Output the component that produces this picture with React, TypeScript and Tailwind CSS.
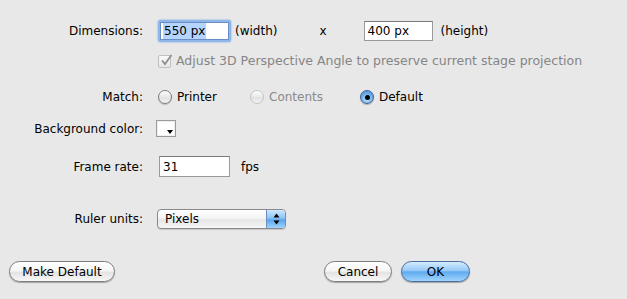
import React from "react";

const font = { fontFamily: '"DejaVu Sans", "Liberation Sans", sans-serif' };

function Label({ children }: { children: React.ReactNode }) {
  return <div className="w-[143px] shrink-0 text-right text-[12px] leading-none text-black">{children}</div>;
}

function Radio({ checked, disabled, label }: { checked?: boolean; disabled?: boolean; label: string }) {
  return (
    <div className="flex items-center">
      {checked ? (
        <div className="w-[14px] h-[14px] rounded-full border border-[#3d6296] bg-[radial-gradient(circle_at_50%_70%,#bfe3ff_0%,#6aaeea_55%,#4a8bd2_100%)] flex items-center justify-center shadow-[0_1px_1px_rgba(0,0,0,0.25)]">
          <div className="w-[5px] h-[5px] rounded-full bg-black" />
        </div>
      ) : (
        <div
          className={
            "w-[14px] h-[14px] rounded-full border bg-[linear-gradient(#ffffff,#e2e2e2_60%,#f4f4f4)] " +
            (disabled ? "border-[#c4c4c4]" : "border-[#7b7b7b] shadow-[0_1px_1px_rgba(0,0,0,0.2)]")
          }
        />
      )}
      <span className={"ml-[5px] text-[12px] leading-none " + (disabled ? "text-[#8a8a8a]" : "text-black")}>{label}</span>
    </div>
  );
}

function AquaButton({ children, primary, w }: { children: React.ReactNode; primary?: boolean; w: string }) {
  return (
    <div
      className={
        w +
        " h-[21px] rounded-full border flex items-center justify-center text-[12px] leading-none text-black " +
        (primary
          ? "border-[#4b6c9c] bg-[linear-gradient(#d4ecff_0%,#96c9f7_45%,#5faaee_52%,#9fd5ff_100%)] shadow-[0_1px_1px_rgba(0,0,0,0.3)]"
          : "border-[#7e7e7e] bg-[linear-gradient(#ffffff_0%,#f6f6f6_45%,#e4e4e4_55%,#f7f7f7_100%)] shadow-[0_1px_1px_rgba(0,0,0,0.3)]")
      }
    >
      {children}
    </div>
  );
}

export default function App() {
  return (
    <div className="w-[627px] h-[299px] bg-[#e8e8e8] overflow-hidden flex flex-col" style={font}>
      {/* Dimensions */}
      <div className="mt-[20px] h-[22px] flex items-center">
        <Label>Dimensions:</Label>
        <div className="ml-[15px] w-[73px] h-[22px] rounded-[3px] bg-[#8fb6e8] p-[2px] shadow-[0_0_2px_#6b9de0]">
          <div className="w-full h-full bg-white border border-[#6a8fc4] flex items-center pl-[2px]">
            <span className="bg-[#b5d5ff] text-[12px] leading-[16px] text-black px-[1px]">550 px</span>
          </div>
        </div>
        <span className="ml-[4px] text-[12px] leading-none">(width)</span>
        <span className="ml-[42px] text-[12px] leading-none">x</span>
        <div className="ml-[37px] w-[69px] h-[20px] bg-white border border-[#9a9a9a] border-t-[#7a7a7a] flex items-center pl-[3px]">
          <span className="text-[12px] leading-none">400 px</span>
        </div>
        <span className="ml-[8px] text-[12px] leading-none">(height)</span>
      </div>

      {/* Checkbox */}
      <div className="mt-[12px] h-[14px] flex items-center">
        <div className="w-[143px] shrink-0" />
        <div className="ml-[15px] w-[13px] h-[13px] rounded-[2px] border border-[#c0c0c0] bg-[linear-gradient(#fafafa,#e6e6e6)] relative">
          <svg viewBox="0 0 13 13" className="absolute left-[1px] -top-[2px] w-[13px] h-[13px]">
            <path d="M2 6.5 L5 10 L11.5 1" fill="none" stroke="#8e8e8e" strokeWidth="1.8" />
          </svg>
        </div>
        <span className="ml-[5px] text-[12.5px] leading-none text-[#858585]">
          Adjust 3D Perspective Angle to preserve current stage projection
        </span>
      </div>

      {/* Match */}
      <div className="mt-[22px] h-[14px] flex items-center">
        <Label>Match:</Label>
        <div className="ml-[15px] w-[92px]">
          <Radio label="Printer" />
        </div>
        <div className="w-[110px]">
          <Radio label="Contents" disabled />
        </div>
        <Radio label="Default" checked />
      </div>

      {/* Background color */}
      <div className="mt-[16px] h-[17px] flex items-center">
        <Label>Background color:</Label>
        <div className="ml-[13px] w-[20px] h-[17px] border border-[#9a9a9a] bg-white relative shadow-[inset_0_0_0_1px_#f0f0f0]">
          <svg viewBox="0 0 6 4" className="absolute right-[2px] bottom-[2px] w-[6px] h-[4px]">
            <path d="M0 0 L6 0 L3 4 Z" fill="#000" />
          </svg>
        </div>
      </div>

      {/* Frame rate */}
      <div className="mt-[19px] h-[21px] flex items-center">
        <Label>Frame rate:</Label>
        <div className="ml-[16px] w-[71px] h-[21px] bg-white border border-[#9a9a9a] border-t-[#7a7a7a] flex items-center pl-[3px]">
          <span className="text-[12px] leading-none">31</span>
        </div>
        <span className="ml-[11px] text-[12px] leading-none">fps</span>
      </div>

      {/* Ruler units */}
      <div className="mt-[32px] h-[20px] flex items-center">
        <Label>Ruler units:</Label>
        <div className="ml-[14px] w-[129px] h-[20px] rounded-[4px] border border-[#8a8a8a] bg-[linear-gradient(#ffffff_0%,#f4f4f4_45%,#e6e6e6_55%,#f6f6f6_100%)] flex items-center overflow-hidden shadow-[0_1px_1px_rgba(0,0,0,0.15)]">
          <span className="ml-[7px] flex-1 text-[12px] leading-none">Pixels</span>
          <div className="w-[19px] h-full border-l border-[#6a8fc4] bg-[linear-gradient(#cfe8ff_0%,#8cc4f5_45%,#5da6ec_55%,#9fd4ff_100%)] flex items-center justify-center">
            <svg viewBox="0 0 7 12" className="w-[7px] h-[12px]">
              <path d="M3.5 0.5 L6.5 4.5 L0.5 4.5 Z" fill="#000" />
              <path d="M3.5 11.5 L6.5 7.5 L0.5 7.5 Z" fill="#000" />
            </svg>
          </div>
        </div>
      </div>

      {/* Buttons */}
      <div className="mt-[32px] h-[21px] flex items-center">
        <div className="ml-[9px]">
          <AquaButton w="w-[106px]">Make Default</AquaButton>
        </div>
        <div className="ml-[209px]">
          <AquaButton w="w-[68px]">Cancel</AquaButton>
        </div>
        <div className="ml-[9px]">
          <AquaButton w="w-[69px]" primary>
            OK
          </AquaButton>
        </div>
      </div>
    </div>
  );
}
